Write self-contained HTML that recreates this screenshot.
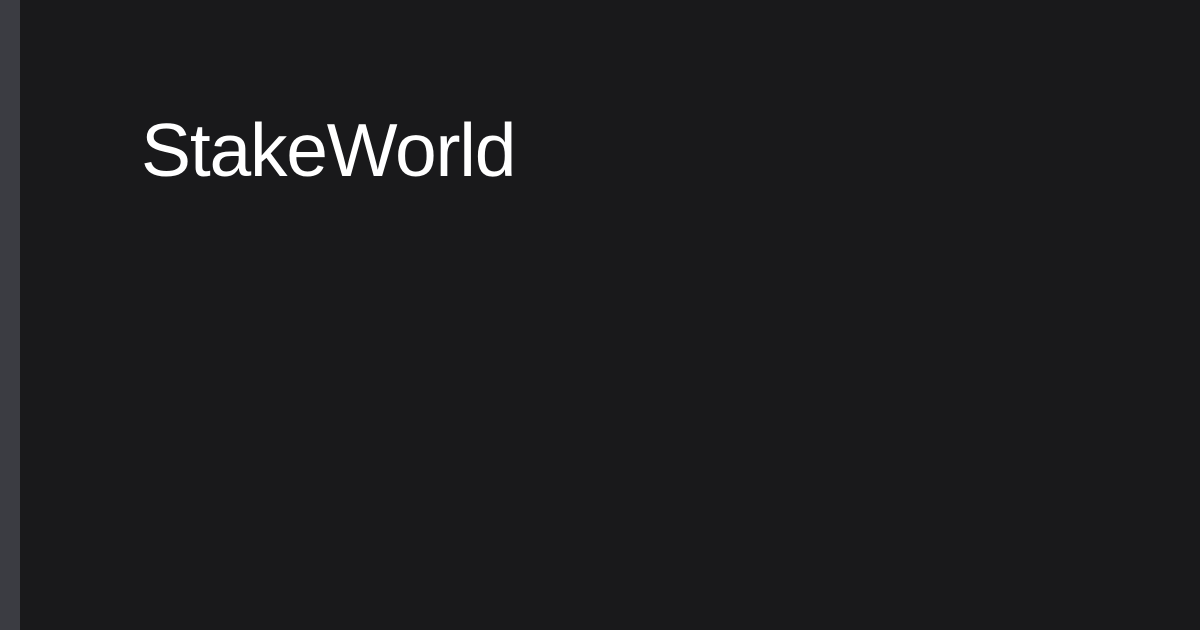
<!DOCTYPE html>
<html><head><style>
html,body{margin:0;padding:0;}
body{width:1200px;height:630px;background:#19191b;position:relative;overflow:hidden;}
.bar{position:absolute;left:0;top:0;width:20px;height:630px;background:#3b3c42;}
.t{position:absolute;left:141px;top:150px;font-family:"Liberation Sans",sans-serif;font-size:75px;letter-spacing:-1.2px;color:#fff;line-height:0;}
</style></head><body>
<div class="bar"></div>
<div class="t">StakeWorld</div>
</body></html>
